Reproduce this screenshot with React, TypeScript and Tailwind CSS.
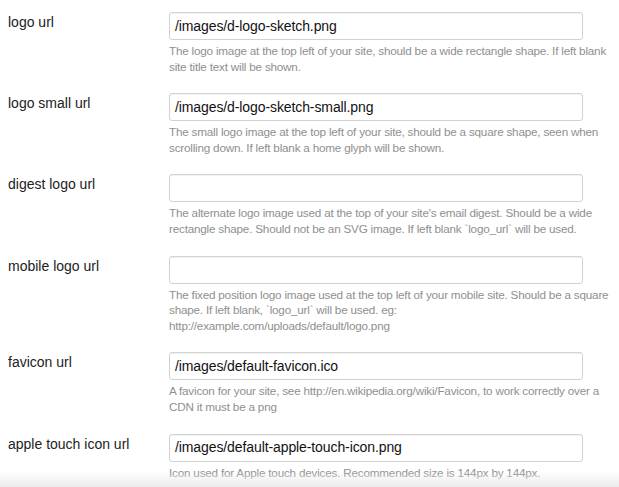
import React from "react";

const rows: { label: string; value: string; desc: string }[] = [
  {
    label: "logo url",
    value: "/images/d-logo-sketch.png",
    desc: "The logo image at the top left of your site, should be a wide rectangle shape. If left blank site title text will be shown.",
  },
  {
    label: "logo small url",
    value: "/images/d-logo-sketch-small.png",
    desc: "The small logo image at the top left of your site, should be a square shape, seen when scrolling down. If left blank a home glyph will be shown.",
  },
  {
    label: "digest logo url",
    value: "",
    desc: "The alternate logo image used at the top of your site's email digest. Should be a wide rectangle shape. Should not be an SVG image. If left blank `logo_url` will be used.",
  },
  {
    label: "mobile logo url",
    value: "",
    desc: "The fixed position logo image used at the top left of your mobile site. Should be a square shape. If left blank, `logo_url` will be used. eg: http://example.com/uploads/default/logo.png",
  },
  {
    label: "favicon url",
    value: "/images/default-favicon.ico",
    desc: "A favicon for your site, see http://en.wikipedia.org/wiki/Favicon, to work correctly over a CDN it must be a png",
  },
  {
    label: "apple touch icon url",
    value: "/images/default-apple-touch-icon.png",
    desc: "Icon used for Apple touch devices. Recommended size is 144px by 144px.",
  },
];

export default function App() {
  return (
    <div
      className="relative w-[619px] h-[487px] overflow-hidden bg-white"
      style={{ fontFamily: '"Liberation Sans", Arial, sans-serif' }}
    >
      <div className="flex flex-col pt-[12px]">
        {rows.map((r) => (
          <div key={r.label} className="flex pb-[19px]">
            <div className="w-[169px] shrink-0 pl-[8px] text-[14px] leading-[20px] text-[#222]">
              {r.label}
            </div>
            <div className="flex flex-col w-[446px]">
              <div className="w-[414px] h-[28px] rounded-[3px] border border-[#d2d2d2] bg-white shadow-[inset_0_1px_1px_rgba(0,0,0,0.06)] px-[5px] flex items-center text-[14px] text-[#111] tracking-[-0.1px]">
                {r.value}
              </div>
              <div className="mt-[3px] text-[11.7px] leading-[15.6px] text-[#8f8f8f] tracking-[-0.2px]">
                {r.desc}
              </div>
            </div>
          </div>
        ))}
      </div>
      <div className="absolute left-0 right-0 bottom-0 h-[16px] bg-gradient-to-b from-[rgba(255,255,255,0)] to-[#ececec]" />
    </div>
  );
}
